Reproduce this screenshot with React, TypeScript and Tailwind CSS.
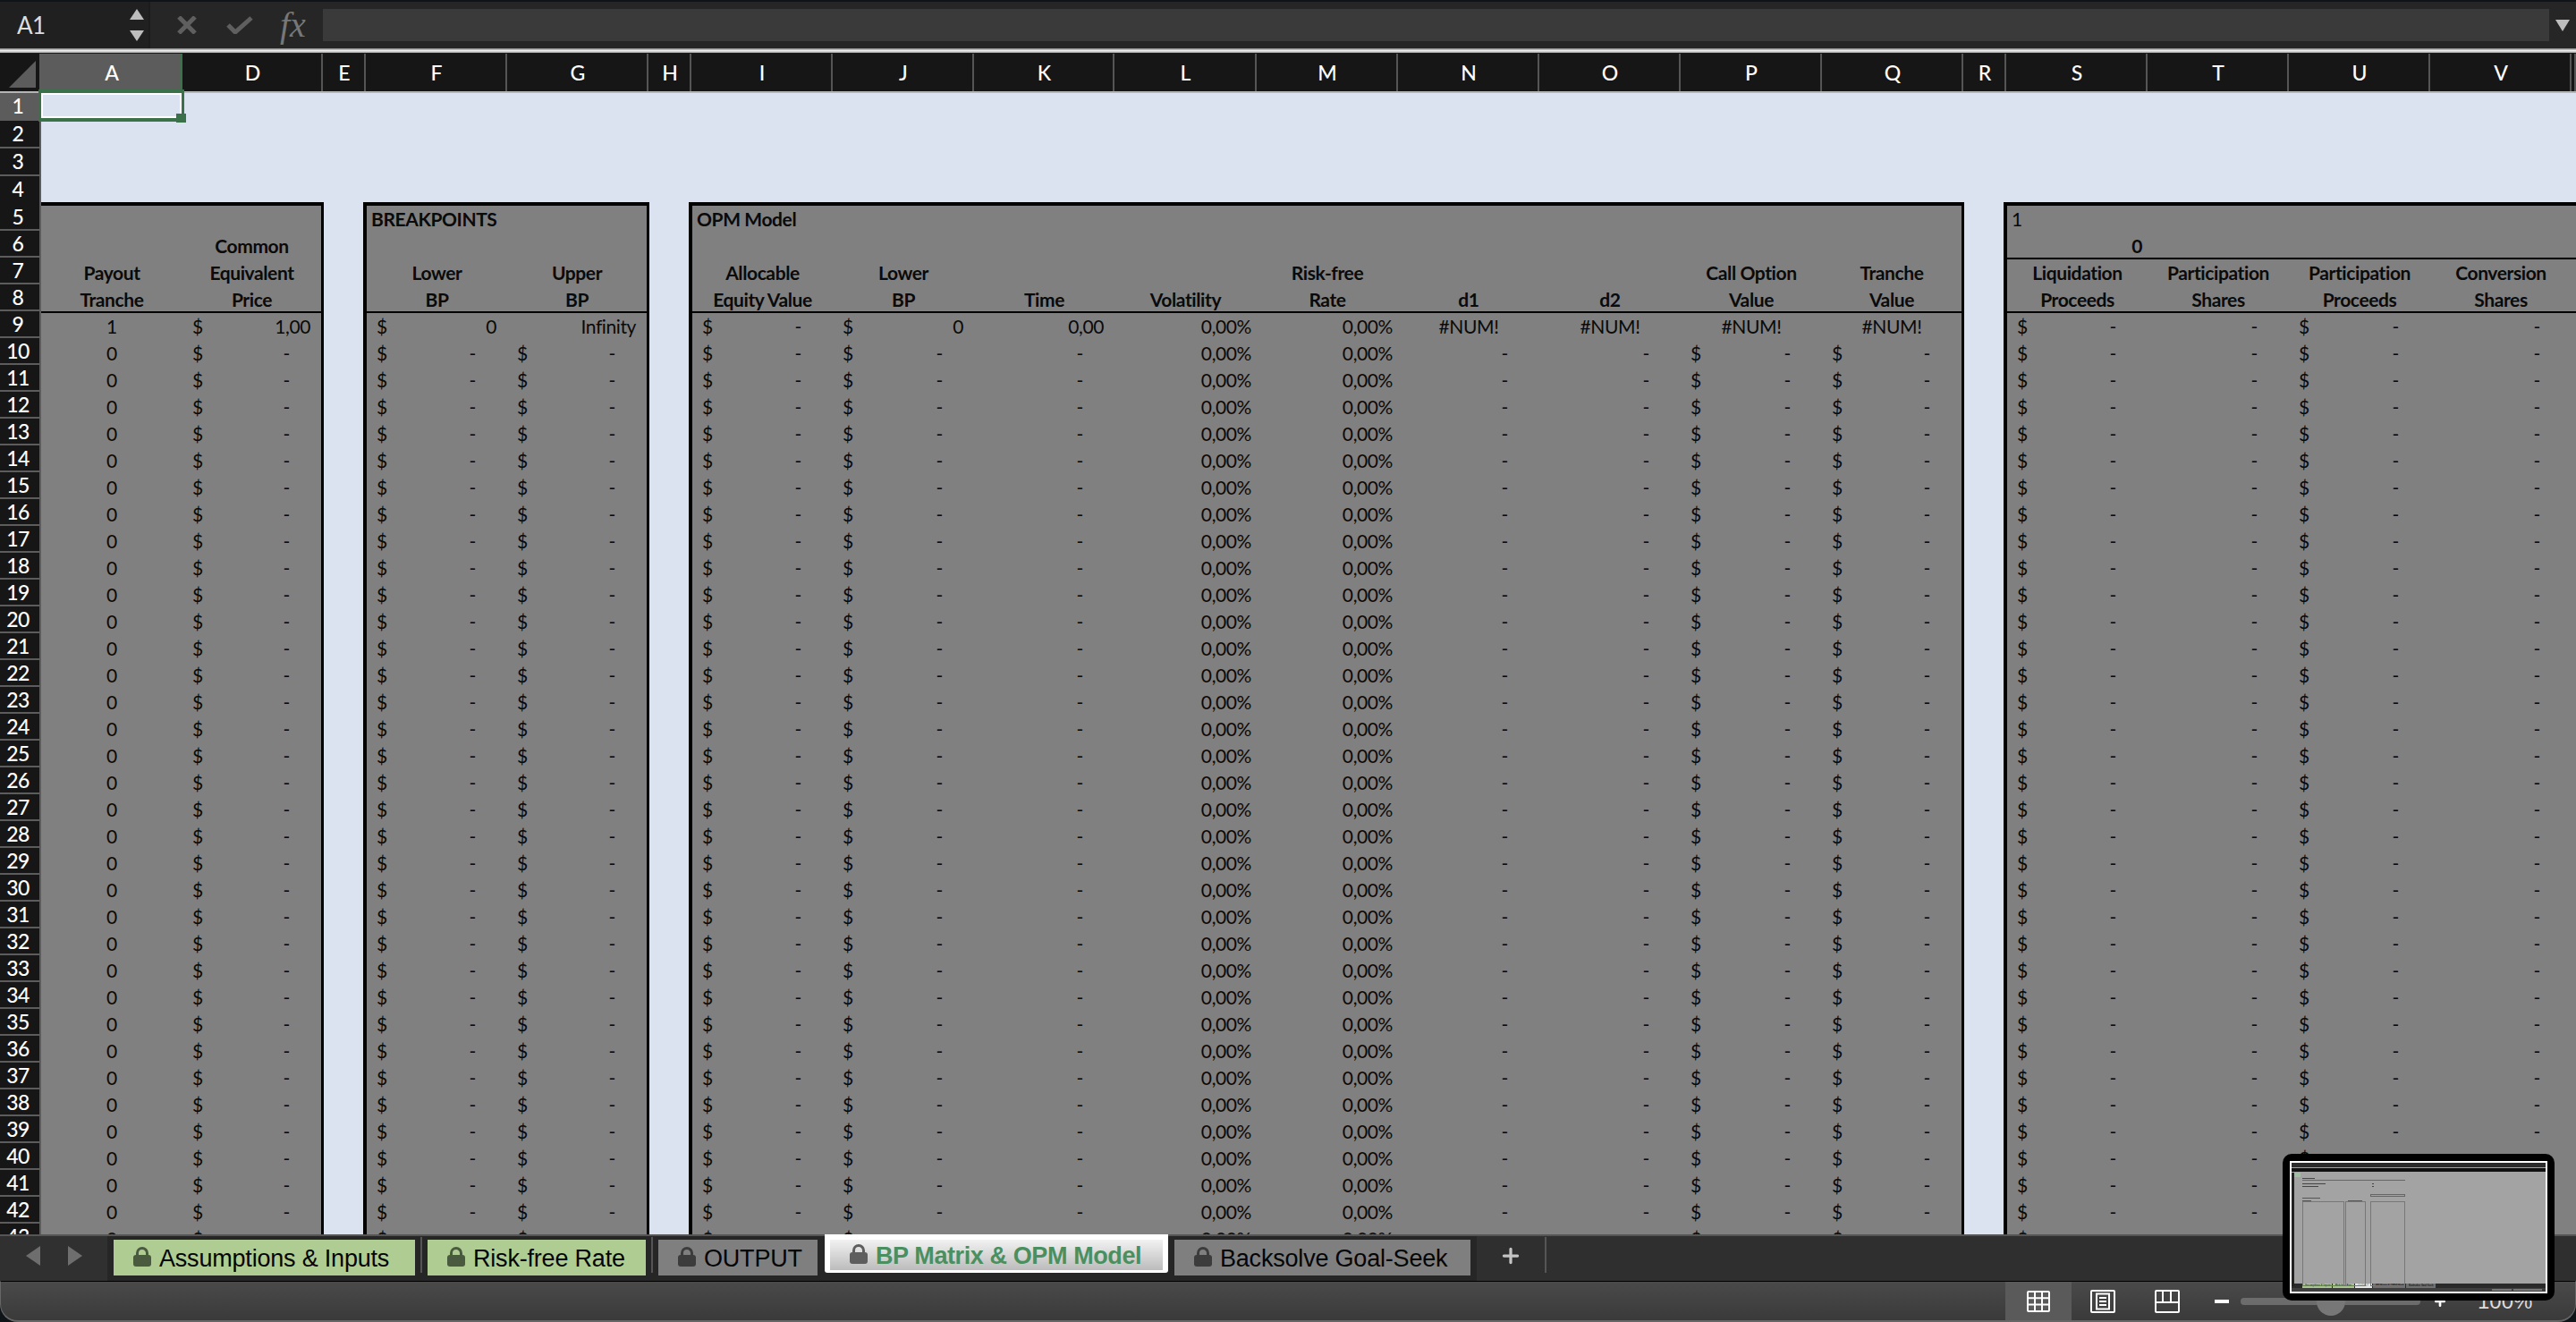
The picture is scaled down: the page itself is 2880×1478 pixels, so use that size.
import { Plus } from "lucide-react";

type Align = "c" | "r" | "d" | "p" | "l";
type Val = { t: string; a: Align; s?: boolean };

const cols = [
  { k: "A", w: "w-[158px]", edge: "" },
  { k: "D", w: "w-[157px]", edge: "border-r-2 border-black" },
  { k: "E", w: "w-[48px]", gap: true, edge: "border-l border-r-[3px] border-black" },
  { k: "F", w: "w-[158px]", edge: "border-l border-black" },
  { k: "G", w: "w-[158px]", edge: "border-r-2 border-black" },
  { k: "H", w: "w-[48px]", gap: true, edge: "border-l border-r-[3px] border-black" },
  { k: "I", w: "w-[158px]", edge: "border-l border-black" },
  { k: "J", w: "w-[158px]", edge: "" },
  { k: "K", w: "w-[157px]", edge: "" },
  { k: "L", w: "w-[159px]", edge: "" },
  { k: "M", w: "w-[158px]", edge: "" },
  { k: "N", w: "w-[158px]", edge: "" },
  { k: "O", w: "w-[158px]", edge: "" },
  { k: "P", w: "w-[158px]", edge: "" },
  { k: "Q", w: "w-[158px]", edge: "border-r-2 border-black" },
  { k: "R", w: "w-[48px]", gap: true, edge: "border-l border-r-[3px] border-black" },
  { k: "S", w: "w-[158px]", edge: "border-l border-black" },
  { k: "T", w: "w-[158px]", edge: "" },
  { k: "U", w: "w-[158px]", edge: "" },
  { k: "V", w: "w-[158px]", edge: "" },
  { k: "", w: "w-[5px]", edge: "" },
];

const money = (t: string): Val => ({ t, a: t === "-" ? "d" : "r", s: true });
const dash: Val = { t: "-", a: "d" };
const pct: Val = { t: "0,00%", a: "p" };
const num: Val = { t: "#NUM!", a: "c" };

const firstRow: Record<string, Val> = {
  A: { t: "1", a: "c" },
  D: money("1,00"),
  F: money("0"),
  G: { t: "Infinity", a: "r" },
  I: money("-"),
  J: money("0"),
  K: { t: "0,00", a: "r" },
  L: pct,
  M: pct,
  N: num,
  O: num,
  P: num,
  Q: num,
  S: money("-"),
  T: dash,
  U: money("-"),
  V: dash,
};

const otherRows: Record<string, Val> = {
  A: { t: "0", a: "c" },
  D: money("-"),
  F: money("-"),
  G: money("-"),
  I: money("-"),
  J: money("-"),
  K: dash,
  L: pct,
  M: pct,
  N: dash,
  O: dash,
  P: money("-"),
  Q: money("-"),
  S: money("-"),
  T: dash,
  U: money("-"),
  V: dash,
};

const headRows: Record<number, Record<string, string>> = {
  5: { F: "BREAKPOINTS", I: "OPM Model", S: "1" },
  6: { D: "Common", S: "0" },
  7: {
    A: "Payout",
    D: "Equivalent",
    F: "Lower",
    G: "Upper",
    I: "Allocable",
    J: "Lower",
    M: "Risk-free",
    P: "Call Option",
    Q: "Tranche",
    S: "Liquidation",
    T: "Participation",
    U: "Participation",
    V: "Conversion",
  },
  8: {
    A: "Tranche",
    D: "Price",
    F: "BP",
    G: "BP",
    I: "Equity Value",
    J: "BP",
    K: "Time",
    L: "Volatility",
    M: "Rate",
    N: "d1",
    O: "d2",
    P: "Value",
    Q: "Value",
    S: "Proceeds",
    T: "Shares",
    U: "Proceeds",
    V: "Shares",
  },
};

const alignClass: Record<Align, string> = {
  c: "justify-center",
  r: "justify-end pr-[12px]",
  d: "justify-end pr-[35px]",
  p: "justify-end pr-[6px]",
  l: "justify-start pl-[5px]",
};

function RowLabel({ n, selected }: { n: number; selected?: boolean }) {
  return (
    <div
      className={`flex w-[46px] shrink-0 items-center justify-center border-r-2 border-b-2 border-[#5c5c5c] pr-[4px] text-[23px] font-medium tracking-[-0.5px] text-white ${
        selected ? "bg-[#5c5c5c]" : "bg-[#161616]"
      } ${n === 5 ? "pt-[2px]" : ""}`}
    >
      {n}
    </div>
  );
}

function TopRow({ n }: { n: number }) {
  return (
    <div className="flex h-[31px]">
      <RowLabel n={n} selected={n === 1} />
      <div className="flex-1 bg-[#dbe2f0]" />
    </div>
  );
}

function PanelRow({ n }: { n: number }) {
  const head = headRows[n];
  const isData = !head;
  const values = n === 9 ? firstRow : otherRows;
  return (
    <div className={`flex ${n === 5 ? "-mt-[2px] h-[32px]" : "h-[30px]"}`}>
      <RowLabel n={n} />
      {cols.map((c) => {
        if (c.gap) {
          return <div key={c.k} className={`${c.w} shrink-0 bg-[#dbe2f0] ${c.edge}`} />;
        }
        const rule = n === 9 ? "border-t-2 border-t-black" : "";
        const rightRule =
          n === 7 && ["S", "T", "U", "V", ""].includes(c.k) ? "border-t-2 border-t-black" : "";
        const topRule = n === 5 ? "border-t-4 border-t-black" : "";
        const base = `relative flex items-end pb-[1px] ${c.w} shrink-0 bg-[#808080] text-[21px] leading-[24px] tracking-[-0.4px] text-[#0a0a0a] whitespace-nowrap ${c.edge} ${rule} ${rightRule} ${topRule}`;
        if (isData) {
          const v = values[c.k];
          if (!v) return <div key={c.k} className={base} />;
          return (
            <div key={c.k} className={`${base} ${alignClass[v.a]}`}>
              {v.s && <span className="absolute left-[11px]">$</span>}
              <span>{v.t}</span>
            </div>
          );
        }
        const t = head[c.k];
        if (n === 5) {
          return (
            <div key={c.k} className={`${base} pl-[5px] ${t === "1" ? "" : "font-bold"}`}>
              {t}
            </div>
          );
        }
        if (n === 6 && c.k === "S") {
          return (
            <div key={c.k} className={`${base} justify-end pr-[6px] font-bold`}>
              {t}
            </div>
          );
        }
        return (
          <div key={c.k} className={`${base} justify-center font-bold`}>
            {t}
          </div>
        );
      })}
    </div>
  );
}

function Lock({ className }: { className: string }) {
  return (
    <svg viewBox="0 0 20 22" className={`h-[22px] w-[20px] shrink-0 ${className}`}>
      <path d="M4.5 11V7a5.5 5.5 0 0 1 11 0v4" fill="none" stroke="currentColor" strokeWidth="3" />
      <rect x="0" y="9" width="20" height="13" rx="3" fill="currentColor" />
    </svg>
  );
}

function Tab({
  label,
  w,
  ml,
  green,
}: {
  label: string;
  w: string;
  ml: string;
  green?: boolean;
}) {
  return (
    <div
      className={`mt-[4px] flex h-[40px] shrink-0 items-center gap-[9px] pl-[22px] font-['Liberation_Sans',sans-serif] text-[27px] tracking-[-0.2px] text-[#050505] ${w} ${ml} ${
        green ? "bg-[#afcd92]" : "bg-[#7f7f7f]"
      }`}
    >
      <Lock className={`-mt-[3px] ${green ? "text-[#4a5a3e]" : "text-[#3c3c3c]"}`} />
      <span className="pt-[2px] whitespace-nowrap">{label}</span>
    </div>
  );
}

function Sep({ className }: { className: string }) {
  return <div className={`mt-[1px] h-[40px] w-[2px] shrink-0 bg-[#555] ${className}`} />;
}

function GridIcon() {
  return (
    <svg viewBox="0 0 26 24" className="h-[24px] w-[26px]" fill="none" stroke="#fff" strokeWidth="2">
      <rect x="1" y="1" width="24" height="22" rx="1" />
      <path d="M9 1v22M17 1v22M1 8.3h24M1 15.6h24" />
    </svg>
  );
}

function PageIcon() {
  return (
    <svg viewBox="0 0 28 26" className="h-[26px] w-[28px]" fill="none" stroke="#fff" strokeWidth="2">
      <rect x="1" y="1" width="26" height="24" rx="1" />
      <rect x="7" y="4.5" width="14" height="17" />
      <path d="M10 9h8M10 13h8M10 17h8" />
    </svg>
  );
}

function BreakIcon() {
  return (
    <svg viewBox="0 0 28 26" className="h-[26px] w-[28px]" fill="none" stroke="#fff" strokeWidth="2">
      <rect x="1" y="1" width="26" height="24" rx="1" />
      <path d="M1 14h26M9 1v13M18 1v13" />
    </svg>
  );
}

function Thumbnail() {
  const thumbTabs = [
    { t: "Assumptions & Inputs", c: "w-[33px] bg-[#a9c78d]" },
    { t: "Risk-free Rate", c: "w-[24px] bg-[#a9c78d]" },
    { t: "OUTPUT", c: "w-[19px] bg-[#e8e8e8] text-[#418a58]" },
    { t: "BP Matrix & OPM Model", c: "w-[36px] bg-[#6f6f6f]" },
    { t: "Backsolve Goal-Seek", c: "w-[33px] bg-[#6f6f6f]" },
  ];
  return (
    <div className="absolute top-[1290px] left-[2552px] z-20 h-[164px] w-[304px] rounded-[10px] bg-black p-[8px]">
      <div className="relative flex h-full w-full flex-col overflow-hidden border-2 border-white bg-[#a3a3a3]">
        <div className="h-[5px] shrink-0 bg-[#2c2c2c]" />
        <div className="mt-[1px] h-[4px] shrink-0 bg-[#111]" />
        <div className="flex-1 bg-[#a3a3a3]" />
        <div className="flex h-[5px] shrink-0 gap-[1px] bg-[#2a2a2a] pl-[12px] text-[3px] leading-[5px] text-black">
          {thumbTabs.map((tab) => (
            <div key={tab.t} className={`truncate pl-[3px] ${tab.c}`}>
              {tab.t}
            </div>
          ))}
        </div>
        <div className="flex h-[4px] shrink-0 justify-end gap-[2px] bg-[#3e3e3e] pr-[4px] pt-[1px]">
          <div className="h-[2px] w-[22px] bg-[#777]" />
          <div className="h-[2px] w-[32px] bg-[#777]" />
        </div>
        {/* miniature of the OUTPUT sheet */}
        <div className="absolute top-[11px] left-0 h-[127px] w-[3px] bg-[#222]" />
        <div className="absolute top-[11px] left-[3px] h-[5px] w-[7px] bg-[#9cc0a0]" />
        <div className="absolute top-[17px] left-[12px] h-[1px] w-[14px] bg-[#444]" />
        <div className="absolute top-[19px] left-[12px] h-[1px] w-[115px] bg-[#666]" />
        <div className="absolute top-[23px] left-[12px] h-[1px] w-[26px] bg-[#444]" />
        <div className="absolute top-[26px] left-[12px] h-[1px] w-[18px] bg-[#444]" />
        <div className="absolute top-[23px] left-[90px] h-[1px] w-[2px] bg-[#444]" />
        <div className="absolute top-[26px] left-[90px] h-[1px] w-[2px] bg-[#444]" />
        <div className="absolute top-[35px] left-[88px] h-[3px] w-[39px] border-[0.5px] border-[#666]" />
        <div className="absolute top-[39px] left-[12px] h-[1px] w-[20px] bg-[#555]" />
        <div className="absolute top-[42px] left-[12px] h-[1px] w-[10px] bg-[#555]" />
        <div className="absolute top-[42px] left-[63px] h-[1px] w-[16px] bg-[#555]" />
        <div className="absolute top-[43px] left-[12px] h-[95px] w-[47px] border border-[#777]" />
        <div className="absolute top-[43px] left-[60px] h-[95px] w-[23px] border border-[#777]" />
        <div className="absolute top-[43px] left-[88px] h-[95px] w-[39px] border border-[#777]" />
      </div>
    </div>
  );
}

export default function App() {
  const rows = Array.from({ length: 39 }, (_, i) => i + 5);
  return (
    <div className="relative flex h-[1478px] w-[2880px] flex-col overflow-hidden bg-[#0e1418] font-['Lato',sans-serif]">
      {/* formula bar */}
      <div className="mt-[2px] flex h-[52px] shrink-0 bg-[#262626]">
        <div className="flex h-full w-[168px] items-center justify-between border-r-2 border-[#1c1c1c] bg-[#202020] pr-[5px] pl-[19px] text-[26px] tracking-[-0.5px] text-[#ddd]">
          <span>A1</span>
          <div className="flex flex-col gap-[12px]">
            <div className="h-0 w-0 border-x-[8px] border-b-[12px] border-x-transparent border-b-[#bdbdbd]" />
            <div className="h-0 w-0 border-x-[8px] border-t-[12px] border-x-transparent border-t-[#bdbdbd]" />
          </div>
        </div>
        <div className="flex w-[193px] items-center pl-[30px]">
          <svg viewBox="0 0 22 20" className="h-[20px] w-[22px]" fill="none" stroke="#5f5f5f" strokeWidth="5">
            <path d="M2 1l18 18M20 1L2 19" />
          </svg>
          <svg viewBox="0 0 30 20" className="ml-[33px] h-[20px] w-[30px]" fill="none" stroke="#5f5f5f" strokeWidth="5">
            <path d="M2 10l8 8L28 2" />
          </svg>
          <span className="ml-[30px] font-['Liberation_Serif',serif] text-[40px] leading-none text-[#777] italic">
            fx
          </span>
        </div>
        <div className="my-[8px] flex-1 bg-[#3a3a3a]" />
        <div className="flex w-[30px] items-center justify-center">
          <div className="h-0 w-0 border-x-[8px] border-t-[13px] border-x-transparent border-t-[#bdbdbd]" />
        </div>
      </div>
      <div className="h-[5px] shrink-0 bg-linear-to-b from-[#777] via-[#ececec] to-[#aaa]" />
      <div className="h-[1px] shrink-0 bg-[#1c1c1c]" />

      {/* column letters */}
      <div className="flex h-[44px] shrink-0 border-b-2 border-[#b5b5b5] bg-[#161616] text-[23px] font-medium text-white">
        <div className="flex w-[46px] shrink-0 items-end justify-end border-r-2 border-[#5c5c5c] pr-[4px] pb-[4px]">
          <div className="h-0 w-0 border-b-[30px] border-l-[30px] border-b-[#5c5c5c] border-l-transparent" />
        </div>
        {cols.map((c, i) => (
          <div
            key={c.k}
            className={`flex shrink-0 items-center justify-center border-r-2 pl-[2px] ${c.w} ${
              i === 0 ? "border-[#3a7148] bg-[#5c5c5c]" : "border-[#555]"
            }`}
          >
            {c.k}
          </div>
        ))}
      </div>

      {/* cells */}
      <div className="min-h-0 flex-1 overflow-hidden">
        {[1, 2, 3, 4].map((n) => (
          <TopRow key={n} n={n} />
        ))}
        {rows.map((n) => (
          <PanelRow key={n} n={n} />
        ))}
      </div>

      {/* A1 selection */}
      <div className="absolute top-[100px] left-[43px] h-[36px] w-[163px] border-x-[3px] border-y-[4px] border-[#3a7148]">
        <div className="h-full w-full border-2 border-white" />
      </div>
      <div className="absolute top-[127px] left-[197px] h-[10px] w-[11px] bg-[#3a7148]" />

      {/* sheet tabs */}
      <div className="flex h-[52px] shrink-0 border-t-2 border-[#555] bg-[#2f2f2f]">
        <div className="flex w-[120px] shrink-0 items-center bg-[#303030] pb-[6px] pl-[29px]">
          <div className="h-0 w-0 border-y-[11px] border-r-[16px] border-y-transparent border-r-[#6e6e6e]" />
          <div className="ml-[31px] h-0 w-0 border-y-[11px] border-l-[16px] border-y-transparent border-l-[#6e6e6e]" />
        </div>
        <div className="flex h-full w-[1531px] shrink-0 bg-[#262626]">
          <Tab label="Assumptions & Inputs" w="w-[337px]" ml="ml-[7px]" green />
          <Sep className="ml-[6px]" />
          <Tab label="Risk-free Rate" w="w-[244px]" ml="ml-[6px]" green />
          <Sep className="ml-[6px]" />
          <Tab label="OUTPUT" w="w-[178px]" ml="ml-[6px]" />
          <div className="ml-[8px] -mt-[2px] h-[43px] w-[384px] shrink-0 rounded-b-[3px] bg-white px-[6px] pt-[6px]">
            <div className="flex h-[34px] items-center gap-[9px] bg-linear-to-b from-[#f2f2f2] to-[#bcbcbc] pl-[22px] font-['Liberation_Sans',sans-serif] text-[27px] font-bold tracking-[-0.4px] text-[#4a8f60]">
              <Lock className="-mt-[2px] text-[#5e5e5e]" />
              <span className="pt-[3px] whitespace-nowrap">BP Matrix &amp; OPM Model</span>
            </div>
          </div>
          <Tab label="Backsolve Goal-Seek" w="w-[331px]" ml="ml-[7px]" />
        </div>
        <div className="flex w-[76px] shrink-0 items-center justify-center pb-[6px]">
          <Plus size={26} strokeWidth={3} color="#c4c4c4" />
        </div>
        <Sep className="" />
      </div>

      {/* status bar */}
      <div className="flex h-[46px] shrink-0 items-center rounded-b-[20px] border-x border-t border-b-2 border-x-[#666] border-t-black border-b-[#666] bg-linear-to-b from-[#4a4a4a] to-[#3a3a3a] pl-[2241px]">
        <div className="flex h-full w-[74px] shrink-0 items-center justify-center bg-[#5a5a5a]">
          <GridIcon />
        </div>
        <div className="flex w-[70px] shrink-0 justify-center">
          <PageIcon />
        </div>
        <div className="flex w-[74px] shrink-0 justify-center">
          <BreakIcon />
        </div>
        <div className="ml-[16px] h-[4px] w-[16px] shrink-0 bg-white" />
        <div className="relative ml-[13px] h-[8px] w-[201px] shrink-0 rounded-full bg-[#6c6c6c]">
          <div className="absolute top-[-12px] left-[85px] h-[32px] w-[32px] rounded-full bg-[#777]" />
        </div>
        <div className="ml-[14px] flex w-[16px] shrink-0 justify-center">
          <Plus size={20} strokeWidth={4} color="#fff" />
        </div>
        <span className="ml-[34px] font-['Liberation_Sans',sans-serif] text-[24px] text-[#ddd]">100%</span>
      </div>

      <Thumbnail />
    </div>
  );
}
